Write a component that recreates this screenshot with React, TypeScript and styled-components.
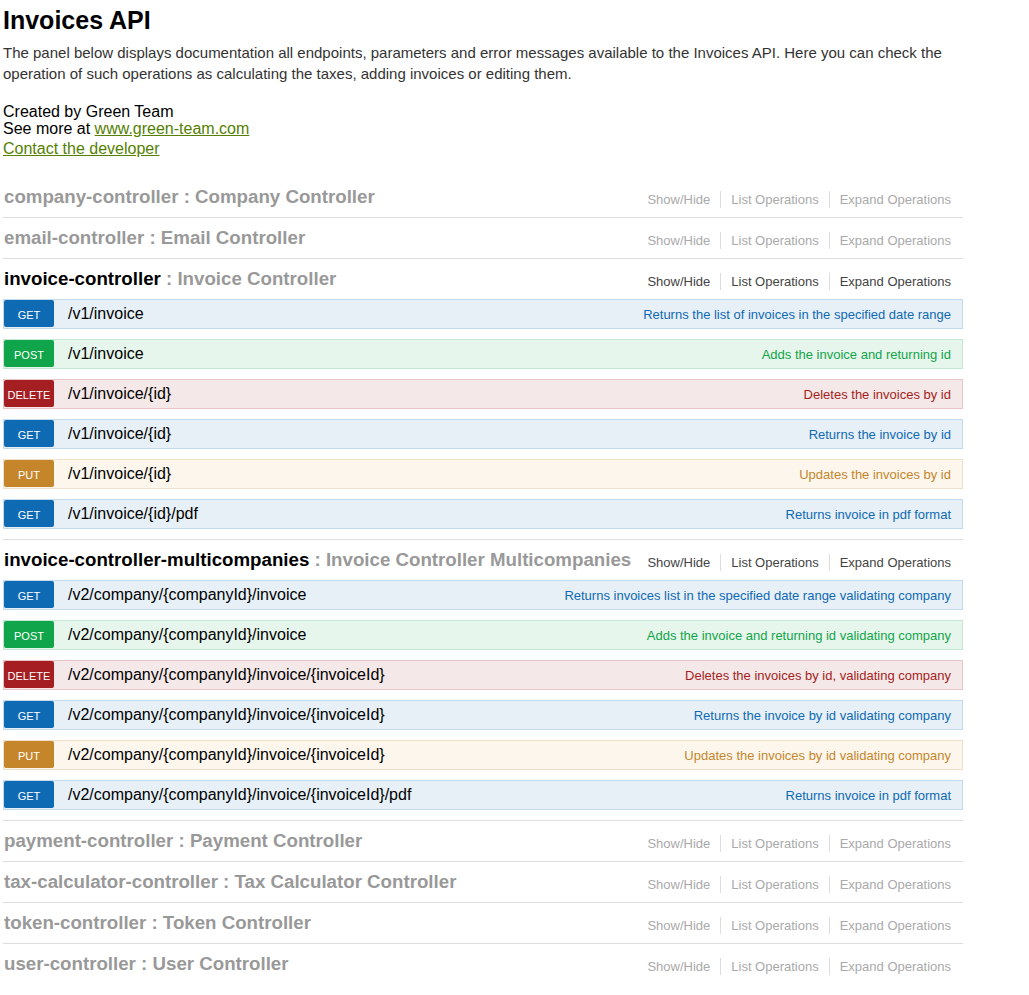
import React from 'react'
import styled, { createGlobalStyle } from 'styled-components'

const GlobalStyle = createGlobalStyle`
  body {
    margin: 0;
    background: #fff;
    font-family: "Liberation Sans", Arial, sans-serif;
    color: #000;
  }
`

type Method = 'get' | 'post' | 'delete' | 'put'

const methodColors: Record<Method, { badge: string; bg: string; border: string }> = {
  get: { badge: '#0f6ab4', bg: '#e7f0f7', border: '#c3d9ec' },
  post: { badge: '#10a54a', bg: '#e7f6ec', border: '#c3e8d1' },
  delete: { badge: '#a41e22', bg: '#f5e8e8', border: '#e8c6c7' },
  put: { badge: '#c5862b', bg: '#fcf6ed', border: '#f0e0ca' },
}

const Wrap = styled.div`
  width: 960px;
  padding: 6px 0 0 3px;
`

const Title = styled.h1`
  margin: 0;
  font-size: 25px;
  font-weight: bold;
  line-height: 29px;
`

const Description = styled.div`
  margin-top: 7px;
  font-size: 15px;
  line-height: 21px;
  color: #333;
`

const Contact = styled.div`
  margin-top: 19px;
  font-size: 16px;
  line-height: 17px;
`

const ContactLine = styled.div<{ $gap?: number }>`
  margin-top: ${({ $gap }) => $gap || 0}px;
`

const Link = styled.a`
  color: #547f00;
  text-decoration: underline;
`

const Resources = styled.ul`
  list-style: none;
  margin: 20px 0 0;
  padding: 0;
`

const Resource = styled.li`
  border-bottom: 1px solid #ddd;

  &:last-child {
    border-bottom: none;
  }
`

const Heading = styled.div`
  height: 40px;
  display: flex;
  align-items: center;
  justify-content: space-between;
`

const ResourceTitle = styled.h2<{ $active?: boolean }>`
  margin: 0 0 0 1px;
  font-size: 18.7px;
  font-weight: bold;
  color: #999;
  white-space: nowrap;

  b {
    color: ${({ $active }) => ($active ? '#000' : '#999')};
  }
`

const Options = styled.ul`
  display: flex;
  list-style: none;
  margin: 4px 2px 0 0;
  padding: 0;
`

const Option = styled.li<{ $active?: boolean }>`
  padding: 0 10px;
  font-size: 13px;
  line-height: 17px;
  color: ${({ $active }) => ($active ? '#444' : '#aaa')};
  border-right: 1px solid #ddd;

  &:last-child {
    border-right: none;
  }
`

const Operations = styled.ul`
  list-style: none;
  margin: 0;
  padding: 0;
`

const Operation = styled.li<{ $method: Method }>`
  display: flex;
  align-items: center;
  height: 30px;
  box-sizing: border-box;
  margin-bottom: 10px;
  background: ${({ $method }) => methodColors[$method].bg};
  border: 1px solid ${({ $method }) => methodColors[$method].border};
`

const Badge = styled.span<{ $method: Method }>`
  align-self: flex-start;
  display: flex;
  align-items: center;
  justify-content: center;
  width: 50px;
  height: 27px;
  padding-top: 3px;
  box-sizing: border-box;
  border-radius: 2px;
  background: ${({ $method }) => methodColors[$method].badge};
  color: #fff;
  font-size: 11px;
  text-transform: uppercase;
`

const Path = styled.span`
  padding-left: 14px;
  font-size: 16px;
  color: #000;
`

const Summary = styled.span<{ $method: Method }>`
  margin-left: auto;
  padding-right: 11px;
  font-size: 13px;
  color: ${({ $method }) => methodColors[$method].badge};
`

type Op = { method: Method; path: string; summary: string }
type Res = { name: string; label: string; active?: boolean; ops?: Op[] }

const resources: Res[] = [
  { name: 'company-controller', label: 'Company Controller' },
  { name: 'email-controller', label: 'Email Controller' },
  {
    name: 'invoice-controller',
    label: 'Invoice Controller',
    active: true,
    ops: [
      { method: 'get', path: '/v1/invoice', summary: 'Returns the list of invoices in the specified date range' },
      { method: 'post', path: '/v1/invoice', summary: 'Adds the invoice and returning id' },
      { method: 'delete', path: '/v1/invoice/{id}', summary: 'Deletes the invoices by id' },
      { method: 'get', path: '/v1/invoice/{id}', summary: 'Returns the invoice by id' },
      { method: 'put', path: '/v1/invoice/{id}', summary: 'Updates the invoices by id' },
      { method: 'get', path: '/v1/invoice/{id}/pdf', summary: 'Returns invoice in pdf format' },
    ],
  },
  {
    name: 'invoice-controller-multicompanies',
    label: 'Invoice Controller Multicompanies',
    active: true,
    ops: [
      { method: 'get', path: '/v2/company/{companyId}/invoice', summary: 'Returns invoices list in the specified date range validating company' },
      { method: 'post', path: '/v2/company/{companyId}/invoice', summary: 'Adds the invoice and returning id validating company' },
      { method: 'delete', path: '/v2/company/{companyId}/invoice/{invoiceId}', summary: 'Deletes the invoices by id, validating company' },
      { method: 'get', path: '/v2/company/{companyId}/invoice/{invoiceId}', summary: 'Returns the invoice by id validating company' },
      { method: 'put', path: '/v2/company/{companyId}/invoice/{invoiceId}', summary: 'Updates the invoices by id validating company' },
      { method: 'get', path: '/v2/company/{companyId}/invoice/{invoiceId}/pdf', summary: 'Returns invoice in pdf format' },
    ],
  },
  { name: 'payment-controller', label: 'Payment Controller' },
  { name: 'tax-calculator-controller', label: 'Tax Calculator Controller' },
  { name: 'token-controller', label: 'Token Controller' },
  { name: 'user-controller', label: 'User Controller' },
]

export default function App() {
  return (
    <>
      <GlobalStyle />
      <Wrap>
        <Title>Invoices API</Title>
        <Description>
          The panel below displays documentation all endpoints, parameters and error messages available to the Invoices API. Here you can check the
          operation of such operations as calculating the taxes, adding invoices or editing them.
        </Description>
        <Contact>
          <ContactLine>Created by Green Team</ContactLine>
          <ContactLine>
            See more at <Link href="#">www.green-team.com</Link>
          </ContactLine>
          <ContactLine $gap={3}>
            <Link href="#">Contact the developer</Link>
          </ContactLine>
        </Contact>

        <Resources>
          {resources.map((r) => (
            <Resource key={r.name}>
              <Heading>
                <ResourceTitle $active={r.active}>
                  <b>{r.name}</b> : {r.label}
                </ResourceTitle>
                <Options>
                  <Option $active={r.active}>Show/Hide</Option>
                  <Option $active={r.active}>List Operations</Option>
                  <Option $active={r.active}>Expand Operations</Option>
                </Options>
              </Heading>
              {r.ops && (
                <Operations>
                  {r.ops.map((op, i) => (
                    <Operation key={i} $method={op.method}>
                      <Badge $method={op.method}>{op.method}</Badge>
                      <Path>{op.path}</Path>
                      <Summary $method={op.method}>{op.summary}</Summary>
                    </Operation>
                  ))}
                </Operations>
              )}
            </Resource>
          ))}
        </Resources>
      </Wrap>
    </>
  )
}
